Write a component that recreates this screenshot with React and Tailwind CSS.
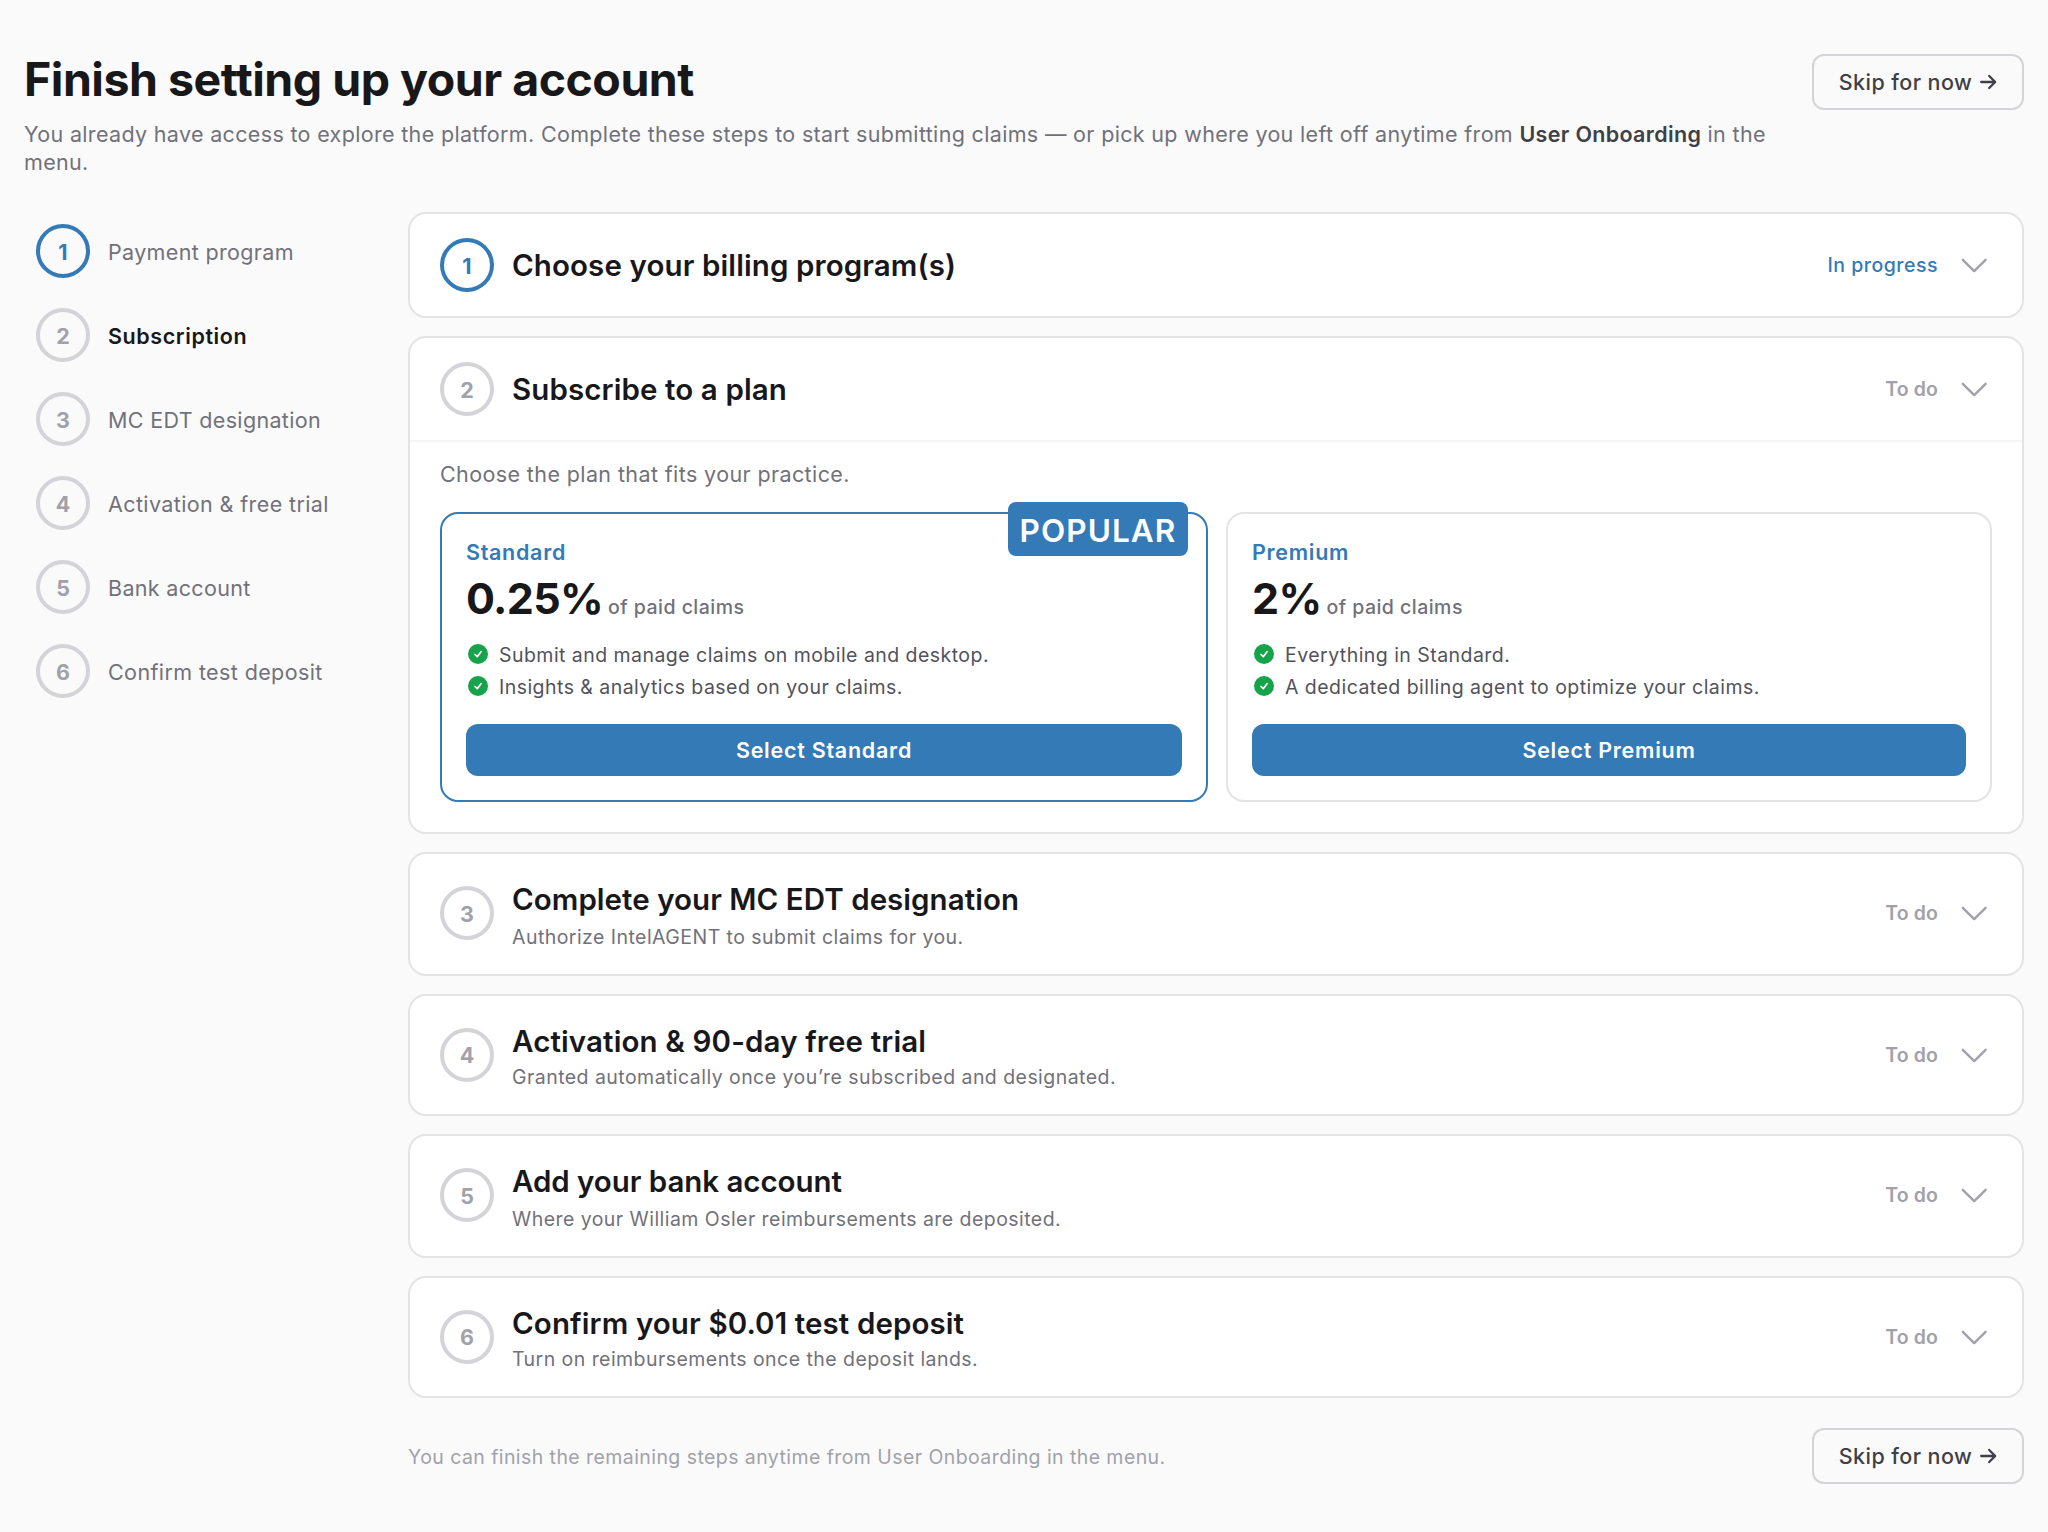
import { useState } from 'react';
import clsx from 'clsx';

const navSteps = [
  { id: 1, label: 'Payment program', tracking: 'tracking-[0.345px]' },
  { id: 2, label: 'Subscription' },
  { id: 3, label: 'MC EDT designation', tracking: 'tracking-[0.34px]' },
  { id: 4, label: 'Activation & free trial', tracking: 'tracking-[0.39px]' },
  { id: 5, label: 'Bank account', tracking: 'tracking-[0.33px]' },
  { id: 6, label: 'Confirm test deposit', tracking: 'tracking-[0.39px]' },
];

const lockedSteps = [
  {
    id: 3,
    title: 'Complete your MC EDT designation',
    titleTracking: 'tracking-[0.04px]',
    subtitle: 'Authorize IntelAGENT to submit claims for you.',
    roomy: true,
  },
  {
    id: 4,
    title: 'Activation & 90-day free trial',
    titleTracking: 'tracking-[0.13px]',
    subtitle: 'Granted automatically once you’re subscribed and designated.',
  },
  {
    id: 5,
    title: 'Add your bank account',
    titleTracking: 'tracking-[-0.05px]',
    subtitle: 'Where your William Osler reimbursements are deposited.',
    roomy: true,
  },
  {
    id: 6,
    title: 'Confirm your $0.01 test deposit',
    subtitle: 'Turn on reimbursements once the deposit lands.',
  },
];

const plans = [
  {
    name: 'Standard',
    rate: '0.25%',
    popular: true,
    features: [
      'Submit and manage claims on mobile and desktop.',
      'Insights & analytics based on your claims.',
    ],
  },
  {
    name: 'Premium',
    rate: '2%',
    features: ['Everything in Standard.', 'A dedicated billing agent to optimize your claims.'],
  },
];

function StepCircle({ number, current, snug }) {
  return (
    <span
      className={clsx(
        'flex size-[54px] shrink-0 items-center justify-center rounded-full border-4 text-[21.5px] leading-7 font-bold',
        current ? 'border-[#337ab7] text-[#337ab7]' : 'border-[#d4d4d8] text-[#a1a1aa]',
        !snug && 'pt-0.5'
      )}
    >
      {number}
    </span>
  );
}

function Chevron() {
  return (
    <svg className="size-9 shrink-0 text-[#a1a1aa]" viewBox="0 0 36 36" fill="none" stroke="currentColor" strokeWidth="2.4" strokeLinecap="round" strokeLinejoin="round">
      <path d="M6.8 12.8 18.2 24.1 29.6 12.8" />
    </svg>
  );
}

function CheckCircle() {
  return (
    <svg className="size-6 shrink-0" viewBox="0 0 24 24" fill="none">
      <circle cx="12" cy="12" r="10" fill="#16a34a" />
      <path d="M9 12.5 11.3 14.7 15 9.7" stroke="#fff" strokeWidth="1.7" strokeLinecap="round" strokeLinejoin="round" />
    </svg>
  );
}

function SkipButton() {
  return (
    <button className="flex h-14 w-[212px] shrink-0 items-center justify-center gap-2 rounded-xl border-2 border-[#d4d4d8] text-[21.5px] leading-7 font-medium tracking-[0.42px] text-[#3f3f46]">
      Skip for now
      <svg className="h-4 w-[17px]" viewBox="0 0 17 16" fill="none" stroke="currentColor" strokeWidth="2.3" strokeLinecap="round" strokeLinejoin="round">
        <path d="M1.2 8H15M9.2 2 15.2 8 9.2 14" />
      </svg>
    </button>
  );
}

function StepHeader({ step, status = 'To do', current, snug, children }) {
  return (
    <button className="flex w-full flex-1 items-center gap-[18px] px-[30px] text-left">
      <StepCircle number={step} current={current} snug={snug} />
      <div className="flex-1">{children}</div>
      <span
        className={clsx(
          'text-[19.5px] leading-7',
          current ? 'font-medium tracking-[0.5px] text-[#337ab7]' : 'font-semibold tracking-[0.1px] text-[#a1a1aa]'
        )}
      >
        {status}
      </span>
      <Chevron />
    </button>
  );
}

function StepTitle({ tracking = 'tracking-[0.1px]', children }) {
  return <h2 className={clsx('text-[29.5px] leading-9 font-semibold text-[#18181b]', tracking)}>{children}</h2>;
}

function PlanCard({ plan }) {
  return (
    <div className={clsx('relative rounded-[18px] border-2 p-6', plan.popular ? 'border-[#337ab7]' : 'border-[#e4e4e7]')}>
      {plan.popular && (
        <span className="absolute -top-3 right-[18px] flex h-[54px] w-[180px] items-center justify-center rounded-lg bg-[#337ab7] pt-1 text-[31.5px] leading-9 font-semibold tracking-[1.1px] text-white">
          POPULAR
        </span>
      )}
      <div className="text-[21.5px] leading-7 font-semibold tracking-[0.7px] text-[#337ab7]">{plan.name}</div>
      <div className="mt-2 flex h-12 items-baseline gap-[5px]">
        <span className="text-[43px] leading-[48px] font-bold tracking-[-0.667px] text-[#18181b]">{plan.rate}</span>
        <span className="text-[19.5px] font-medium tracking-[0.47px] text-[#71717a]">of paid claims</span>
      </div>
      <ul className="mt-[18px] space-y-1">
        {plan.features.map((feature) => (
          <li key={feature} className="flex h-7 items-center gap-[9px] text-[19.5px] leading-6 tracking-[0.455px] text-[#52525b]">
            <CheckCircle />
            <span className="pt-0.5">{feature}</span>
          </li>
        ))}
      </ul>
      <button className="mt-6 flex h-[52px] w-full items-center justify-center rounded-xl bg-[#337ab7] text-[21.5px] font-semibold tracking-[0.745px] text-white">
        Select {plan.name}
      </button>
    </div>
  );
}

export default function App() {
  const [active, setActive] = useState(2);

  return (
    <div className="min-h-screen bg-[#fafafa] px-6 pt-[50px] pb-12 font-['Inter','Liberation_Sans',sans-serif]">
      {/* Page header */}
      <header className="flex items-start justify-between gap-6">
        <div>
          <h1 className="text-[46.5px] leading-[58px] font-bold tracking-[-0.49px] text-[#18181b]">
            Finish setting up your account
          </h1>
          <p className="mt-3 text-[21.5px] leading-7 tracking-[0.333px] text-[#71717a]">
            You already have access to explore the platform. Complete these steps to start submitting claims — or pick
            up where you left off anytime from <strong className="font-semibold text-[#3f3f46]">User Onboarding</strong>{' '}
            in the menu.
          </p>
        </div>
        <div className="mt-1">
          <SkipButton />
        </div>
      </header>

      <div className="mt-9 flex">
        {/* Step list */}
        <nav className="flex w-96 shrink-0 flex-col gap-[30px] pt-3 pl-3">
          {navSteps.map((step) => (
            <button key={step.id} className="flex items-center gap-[18px] text-left" onClick={() => setActive(step.id)}>
              <StepCircle number={step.id} current={step.id === 1} />
              <span
                className={clsx(
                  'pt-0.5 text-[21.5px] leading-7',
                  active === step.id
                    ? 'font-semibold tracking-[0.59px] text-[#18181b]'
                    : ['text-[#71717a]', step.tracking]
                )}
              >
                {step.label}
              </span>
            </button>
          ))}
        </nav>

        <main className="flex-1">
          <div className="flex flex-col gap-[18px]">
            <section className="flex h-[106px] rounded-[18px] border-2 border-[#e4e4e7] bg-white">
              <StepHeader step={1} status="In progress" current>
                <StepTitle>Choose your billing program(s)</StepTitle>
              </StepHeader>
            </section>

            <section className="rounded-[18px] border-2 border-[#e4e4e7] bg-white">
              <div className="flex h-[102px]">
                <StepHeader step={2}>
                  <StepTitle>Subscribe to a plan</StepTitle>
                </StepHeader>
              </div>
              <div className="border-t-2 border-[#f4f4f5] px-[30px] pt-[18px] pb-[30px]">
                <p className="text-[21.5px] leading-7 tracking-[0.39px] text-[#71717a]">
                  Choose the plan that fits your practice.
                </p>
                <div className="mt-6 grid grid-cols-[768px_1fr] gap-[18px]">
                  {plans.map((plan) => (
                    <PlanCard key={plan.name} plan={plan} />
                  ))}
                </div>
              </div>
            </section>

            {lockedSteps.map((step) => (
              <section
                key={step.id}
                className={clsx('flex rounded-[18px] border-2 border-[#e4e4e7] bg-white', step.roomy ? 'h-[124px] pb-0.5' : 'h-[122px]')}
              >
                <StepHeader step={step.id} snug={!step.roomy}>
                  <div className={step.roomy ? 'pt-1.5' : 'pt-1'}>
                    <StepTitle tracking={step.titleTracking}>{step.title}</StepTitle>
                    <p
                      className={clsx(
                        'text-[19.5px] leading-7 tracking-[0.45px] text-[#71717a]',
                        step.roomy ? 'mt-1.5' : 'mt-1'
                      )}
                    >
                      {step.subtitle}
                    </p>
                  </div>
                </StepHeader>
              </section>
            ))}
          </div>

          {/* Footer */}
          <div className="mt-[30px] flex items-center justify-between">
            <p className="pt-0.5 text-[19.5px] leading-7 tracking-[0.425px] text-[#a1a1aa]">
              You can finish the remaining steps anytime from User Onboarding in the menu.
            </p>
            <SkipButton />
          </div>
        </main>
      </div>
    </div>
  );
}
